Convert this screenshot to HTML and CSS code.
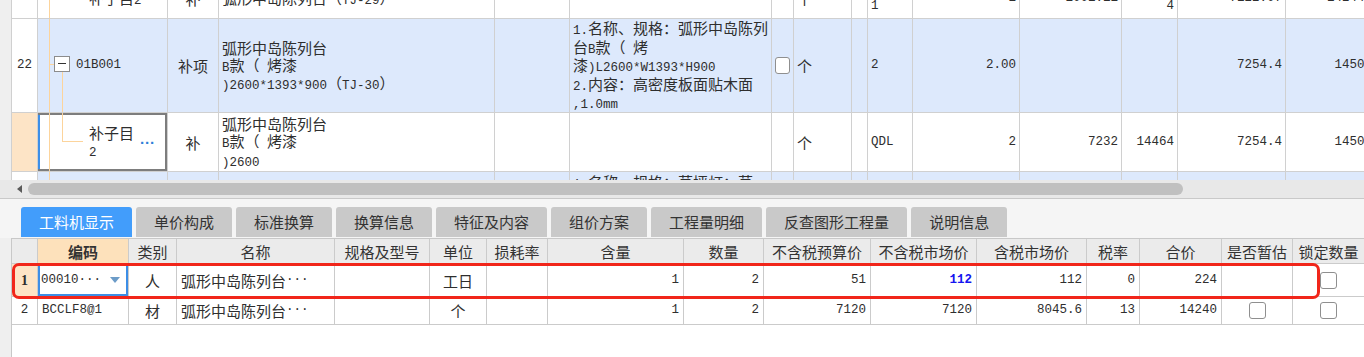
FILE: index.html
```html
<!DOCTYPE html>
<html lang="zh-CN">
<head>
<meta charset="utf-8">
<title>工料机显示</title>
<link rel="stylesheet" href="styles.css">
</head>
<body>
<div class="top-view">
  <div class="tgrid">
    <!-- partial row -->
    <div class="c"></div>
    <div class="c code"><span>补子目<span class="m">2</span></span></div>
    <div class="c ctr">补</div>
    <div class="c"><span>弧形中岛陈列台（<span class="m">TJ-29</span>）</span></div>
    <div class="c"></div>
    <div class="c"></div>
    <div class="c"></div>
    <div class="c">个</div>
    <div class="c"></div>
    <div class="c m"><div>QDL<br>1</div></div>
    <div class="c m r">1</div>
    <div class="c m r">1001.11</div>
    <div class="c m r"><div>1424<br>4</div></div>
    <div class="c m r">7122.07</div>
    <div class="c m r">14244.14</div>

    <!-- row 22 -->
    <div class="c ctr m">22</div>
    <div class="c code code-root blue">
      <span class="tree th1"></span><span class="tog"></span><span class="tree tv1"></span>
      <span class="m">01B001</span>
    </div>
    <div class="c ctr blue">补项</div>
    <div class="c blue"><div>弧形中岛陈列台<br><span class="m">B</span>款（<span class="m"> </span>烤漆<br><span class="m">)2600*1393*900</span>（<span class="m">TJ-30</span>）</div></div>
    <div class="c blue"></div>
    <div class="c blue"><div><span class="m">1.</span>名称、规格：弧形中岛陈列<br>台<span class="m">B</span>款（<span class="m"> </span>烤<br>漆<span class="m">)L2600*W1393*H900</span><br><span class="m">2.</span>内容：高密度板面贴木面<br><span class="m">,1.0mm</span></div></div>
    <div class="c blue ctr"><span class="chk"></span></div>
    <div class="c blue">个</div>
    <div class="c blue"></div>
    <div class="c blue m">2</div>
    <div class="c blue m r">2.00</div>
    <div class="c blue"></div>
    <div class="c blue"></div>
    <div class="c blue m r">7254.4</div>
    <div class="c blue m r">14508.8</div>

    <!-- selected child row -->
    <div class="c peach"></div>
    <div class="c code selected">
      <span class="tree tv2"></span><span class="tree th2"></span>
      <div>补子目<br><span class="m">2</span></div>
      <span class="dots">···</span>
    </div>
    <div class="c ctr">补</div>
    <div class="c"><div>弧形中岛陈列台<br><span class="m">B</span>款（<span class="m"> </span>烤漆<br><span class="m">)2600</span></div></div>
    <div class="c"></div>
    <div class="c"></div>
    <div class="c"></div>
    <div class="c">个</div>
    <div class="c"></div>
    <div class="c m">QDL</div>
    <div class="c m r">2</div>
    <div class="c m r">7232</div>
    <div class="c m r">14464</div>
    <div class="c m r">7254.4</div>
    <div class="c m r">14508.8</div>

    <!-- next row (cut) -->
    <div class="c"></div>
    <div class="c code blue"></div>
    <div class="c blue"></div>
    <div class="c blue"></div>
    <div class="c blue"></div>
    <div class="c blue top"><div><span class="m">1.</span>名称、规格：草坪灯：草<br>台</div></div>
    <div class="c blue"></div>
    <div class="c blue"></div>
    <div class="c blue"></div>
    <div class="c blue"></div>
    <div class="c blue"></div>
    <div class="c blue"></div>
    <div class="c blue"></div>
    <div class="c blue"></div>
    <div class="c blue"></div>
  </div>
</div>

<div class="hscroll">
  <span class="arrow"></span>
  <span class="thumb"></span>
</div>

<div class="tabs">
  <div class="tab active">工料机显示</div>
  <div class="tab">单价构成</div>
  <div class="tab">标准换算</div>
  <div class="tab">换算信息</div>
  <div class="tab">特征及内容</div>
  <div class="tab">组价方案</div>
  <div class="tab">工程量明细</div>
  <div class="tab">反查图形工程量</div>
  <div class="tab">说明信息</div>
</div>

<div class="bottom">
  <div class="bview">
    <div class="bgrid">
      <div class="b h"></div>
      <div class="b h key">编码</div>
      <div class="b h">类别</div>
      <div class="b h">名称</div>
      <div class="b h">规格及型号</div>
      <div class="b h">单位</div>
      <div class="b h">损耗率</div>
      <div class="b h">含量</div>
      <div class="b h">数量</div>
      <div class="b h">不含税预算价</div>
      <div class="b h">不含税市场价</div>
      <div class="b h">含税市场价</div>
      <div class="b h">税率</div>
      <div class="b h">合价</div>
      <div class="b h">是否暂估</div>
      <div class="b h">锁定数量</div>

      <div class="b ctr peach rn1">1</div>
      <div class="b editing"><span class="m">00010···</span><span class="dd"></span></div>
      <div class="b ctr">人</div>
      <div class="b">弧形中岛陈列台<span class="m">···</span></div>
      <div class="b"></div>
      <div class="b ctr">工日</div>
      <div class="b"></div>
      <div class="b m r">1</div>
      <div class="b m r">2</div>
      <div class="b m r">51</div>
      <div class="b m r hl">112</div>
      <div class="b m r">112</div>
      <div class="b m r">0</div>
      <div class="b m r">224</div>
      <div class="b"></div>
      <div class="b ctr"><span class="chk"></span></div>

      <div class="b ctr m">2</div>
      <div class="b m">BCCLF8@1</div>
      <div class="b ctr">材</div>
      <div class="b">弧形中岛陈列台<span class="m">···</span></div>
      <div class="b"></div>
      <div class="b ctr">个</div>
      <div class="b"></div>
      <div class="b m r">1</div>
      <div class="b m r">2</div>
      <div class="b m r">7120</div>
      <div class="b m r">7120</div>
      <div class="b m r">8045.6</div>
      <div class="b m r">13</div>
      <div class="b m r">14240</div>
      <div class="b ctr"><span class="chk"></span></div>
      <div class="b ctr"><span class="chk"></span></div>
    </div>
    <div class="annot"></div>
  </div>
</div>
</body>
</html>
```

FILE: styles.css
```css
* {
  box-sizing: border-box;
  margin: 0;
  padding: 0;
}

body {
  width: 1364px;
  height: 357px;
  overflow: hidden;
  background: #f0f0f0;
  font-family: "Noto Sans CJK SC", sans-serif;
  color: #2e2e2e;
}

.m {
  font-family: "Liberation Mono", "Noto Sans CJK SC", monospace;
  font-size: 12.5px;
}

span.m {
  line-height: 1;
}

/* ---------- top grid ---------- */
.top-view {
  height: 180px;
  overflow: hidden;
  padding-left: 11px;
  background: #efefef;
}

.tgrid {
  display: grid;
  grid-template-columns: 26px 130px 51px 276px 75px 202px 22px 58px 16px 45px 107px 102px 56px 108px 105px;
  grid-template-rows: 41px 94px 59px 94px;
  width: max-content;
  margin-top: -22px;
  border-left: 1px solid #d0d0d0;
  background: #fff;
}

.c {
  position: relative;
  display: flex;
  align-items: center;
  padding: 0 3px;
  border-right: 1px solid #d0d0d0;
  border-bottom: 1px solid #d0d0d0;
  font-size: 15px;
  line-height: 17px;
  white-space: nowrap;
  overflow: hidden;
}

.c.m {
  font-size: 12.5px;
}

.blue {
  background: #dde9fc;
}

.peach {
  background: #fde4c6;
}

.ctr {
  justify-content: center;
  text-align: center;
}

.r {
  justify-content: flex-end;
  text-align: right;
}

.top {
  align-items: flex-start;
  padding-top: 1px;
}

.code {
  padding-left: 51px;
}

.code::before {
  content: "";
  position: absolute;
  left: 11px;
  top: 0;
  bottom: 0;
  width: 1px;
  background: #fcd49c;
}

.code-root {
  padding-left: 38px;
}

.tree {
  position: absolute;
  background: #fcd49c;
}

.th1 {
  left: 11px;
  top: 45px;
  width: 5px;
  height: 1px;
}

.tv1 {
  left: 24px;
  top: 53px;
  bottom: 0;
  width: 1px;
}

.tv2 {
  left: 24px;
  top: 0;
  height: 28px;
  width: 1px;
}

.th2 {
  left: 24px;
  top: 28px;
  width: 21px;
  height: 1px;
}

.tog {
  position: absolute;
  left: 16px;
  top: 37px;
  width: 16px;
  height: 16px;
  border: 1px solid #8c8c8c;
  background: #fff;
}

.tog::after {
  content: "";
  position: absolute;
  left: 3px;
  top: 6px;
  width: 8px;
  height: 1px;
  background: #333;
}

.selected {
  box-shadow: inset 0 2px 0 #7d7d7d, inset -2px 0 0 #7d7d7d, inset 0 -2px 0 #7d7d7d, inset 2px 0 0 #3d8fe8;
}

.dots {
  margin-left: auto;
  margin-right: 9px;
  font-family: "Liberation Sans", sans-serif;
  font-size: 15px;
  font-weight: 700;
  color: #2f7fd8;
}

.chk {
  display: block;
  width: 17px;
  height: 17px;
  border: 1px solid #8f8f8f;
  border-radius: 3px;
  background: #fff;
}

/* ---------- scrollbar ---------- */
.hscroll {
  display: flex;
  align-items: center;
  gap: 6px;
  height: 19px;
  padding-left: 17px;
  padding-bottom: 1px;
  background: #e8e8e8;
  border-bottom: 1px solid #c9c9c9;
}

.arrow {
  width: 0;
  height: 0;
  border-top: 4px solid transparent;
  border-bottom: 4px solid transparent;
  border-right: 5px solid #5a5a5a;
}

.thumb {
  width: 1155px;
  height: 12px;
  border-radius: 6px;
  background: #c0c0c0;
}

/* ---------- tabs ---------- */
.tabs {
  display: flex;
  gap: 4px;
  height: 39px;
  padding: 8px 0 0 21px;
  background: #f5f5f5;
}

.tab {
  height: 30px;
  padding: 0 18px;
  border-radius: 3px 3px 0 0;
  background: #c9c9c9;
  font-size: 15px;
  line-height: 30px;
  color: #333;
  white-space: nowrap;
}

.tab.active {
  background: #429dfb;
  color: #fff;
}

/* ---------- bottom grid ---------- */
.bottom {
  height: 119px;
  padding-left: 11px;
  background: #efefef;
}

.bview {
  position: relative;
  height: 100%;
  background: #fff;
  border-left: 1px solid #c8c8c8;
  border-top: 1px solid #c8c8c8;
}

.bgrid {
  display: grid;
  grid-template-columns: 26px 91px 48px 158px 95px 57px 61px 136px 80px 107px 106px 110px 53px 82px 71px 72px;
  grid-template-rows: 25px 33px 28px;
}

.b {
  position: relative;
  display: flex;
  align-items: center;
  padding: 0 4px;
  border-right: 1px solid #cbcbcb;
  border-bottom: 1px solid #cbcbcb;
  font-size: 15px;
  line-height: 17px;
  white-space: nowrap;
  overflow: hidden;
}

.b.m {
  font-size: 12.5px;
}

.h {
  justify-content: center;
  background: #ebebeb;
  color: #333;
}

.h.key {
  background: #fde1bb;
  font-weight: 700;
}

.rn1 {
  font-family: "Liberation Serif", serif;
  font-size: 14px;
  font-weight: 700;
}

.editing {
  box-shadow: inset 0 0 0 2px #3d8ee6;
  padding-left: 3px;
}

.dd {
  width: 0;
  height: 0;
  margin-left: auto;
  margin-right: 4px;
  border-left: 5px solid transparent;
  border-right: 5px solid transparent;
  border-top: 6px solid #6c9cc8;
}

.hl {
  color: #1515f0;
  font-weight: 700;
}

.annot {
  position: absolute;
  left: 0;
  top: 24px;
  width: 1308px;
  height: 36px;
  border: 3px solid #f1261a;
  border-radius: 7px;
}
```
